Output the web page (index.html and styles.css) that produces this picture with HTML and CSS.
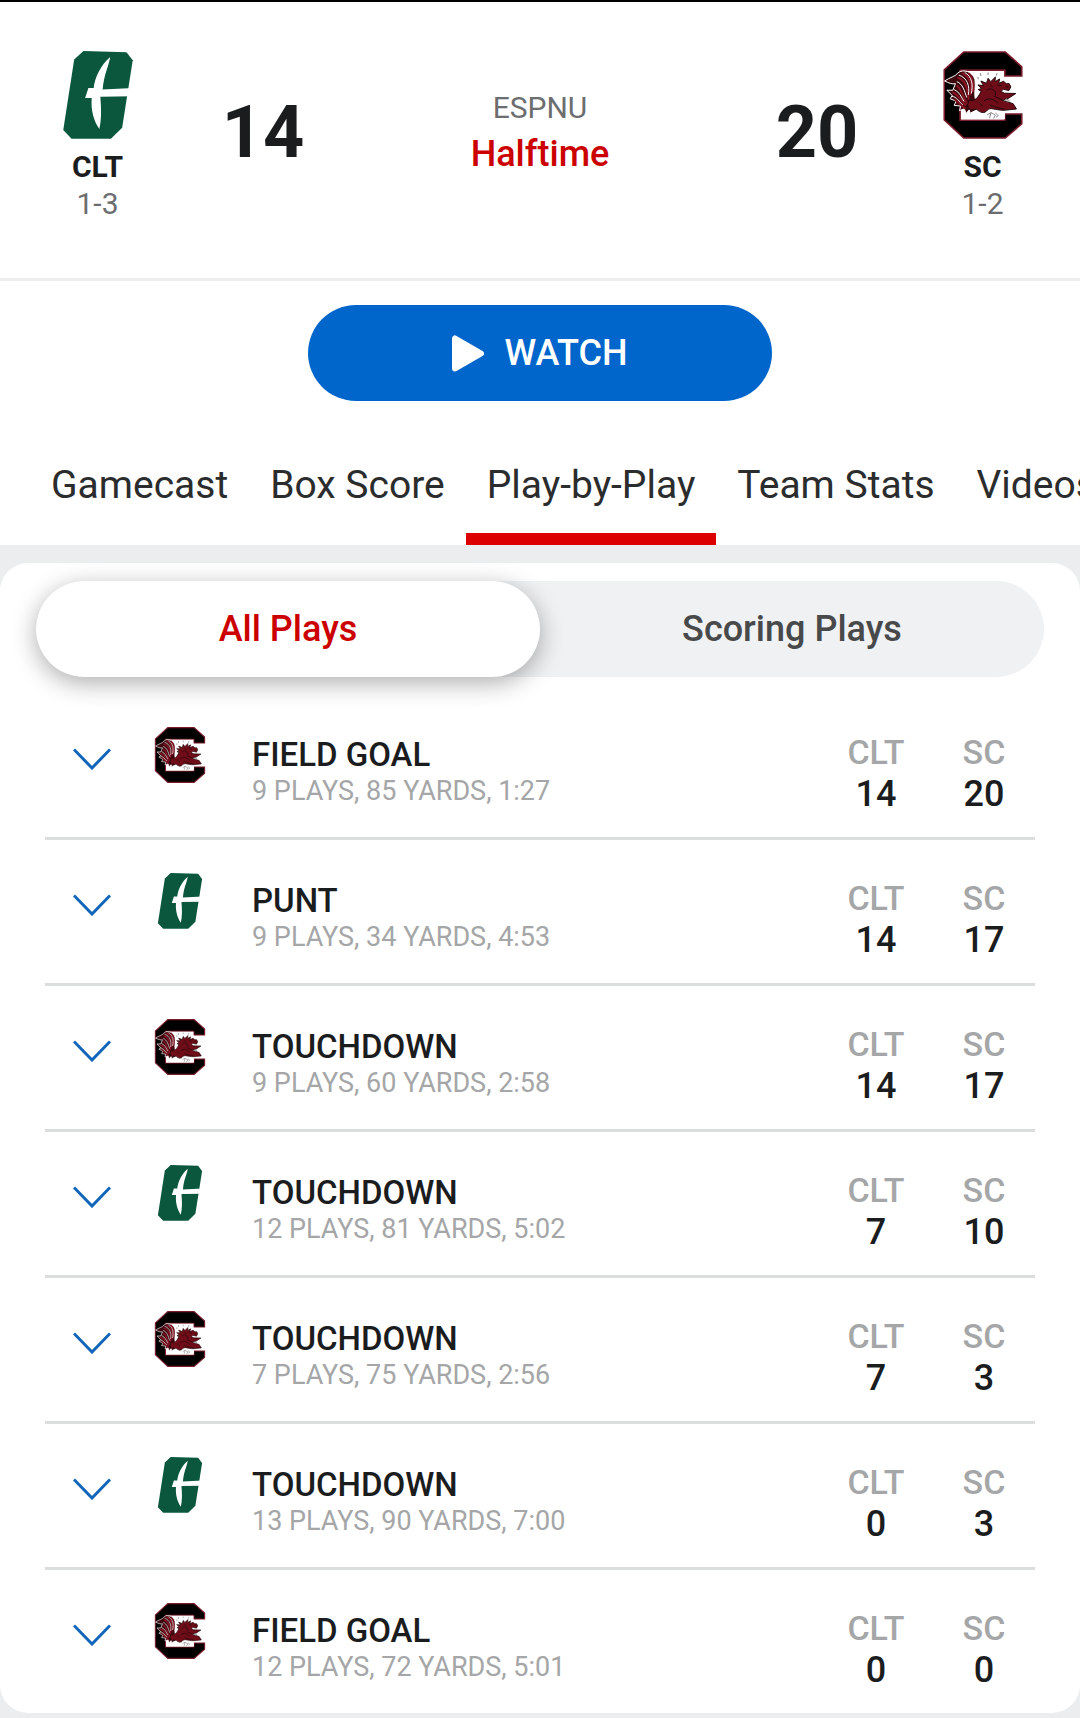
FILE: index.html
```html
<!DOCTYPE html>
<html lang="en">
<head>
<meta charset="utf-8">
<meta name="viewport" content="width=device-width, initial-scale=1">
<title>CLT at SC - Play-by-Play</title>
<link rel="stylesheet" href="styles.css">
</head>
<body>
<svg class="sprite" aria-hidden="true">
  <symbol id="clt" viewBox="56 62 240 266">
    <path fill="#0b573e" d="M132 62L262 66L281 90L249 294L215 327H96L71 301L104 88Z"/>
    <path fill="#fff" d="M213 80C207 112 194 132 190 178L282 174L278 199L183 200C186 238 187 266 180 298C163 272 154 242 157 204H137L147 174H163C166 142 184 105 213 80Z"/>
  </symbol>
  <symbol id="sc" viewBox="71 61 241 267">
    <path fill="#000" stroke="#7b1c2b" stroke-width="5" d="M133 64H259L309 109V137H258V119H122V271H258V252H309V282L259 325H133L74 270V118Z"/>
    <path fill="#fff" d="M125 122H255V142L277 160L274 178L292 188V238L258 242V268H125Z"/>
    <path fill="#3c080e" stroke="#fff" stroke-width="3" d="M75 152C92 140 106 140 116 127C130 115 160 122 167 148C170 170 164 188 168 206L176 238L152 250L150 239L140 251L135 236L120 242L124 228L104 226L110 213L92 206L98 196L82 180L100 180L108 160C98 163 88 158 75 152Z"/>
    <path fill="none" stroke="#8a1423" stroke-width="6" d="M128 128C150 138 160 160 153 196M114 142C136 146 146 176 148 210M112 166C126 176 130 198 144 222M98 186C116 190 124 212 140 226M106 208L138 236M148 128C162 142 164 164 161 186"/>
    <path fill="none" stroke="#fff" stroke-width="3" d="M136 126C158 138 162 164 156 190M118 134C144 142 152 168 147 194M112 154C130 160 136 184 142 202M104 178C120 184 126 202 134 214M96 198C112 200 120 216 130 224"/>
    <path fill="#6e0d18" stroke="#23080b" stroke-width="3" d="M150 208C162 218 174 204 180 194L186 184L177 178L187 175L176 164L193 166L185 152L202 159L207 144L215 154L229 140L228 154L242 146L239 159L254 153L262 160L271 160L276 170L270 181L253 177L246 184L257 189L291 190L268 205L250 210L283 221L293 237L254 241C228 240 213 231 205 240C196 252 184 249 172 238L152 240L144 226Z"/>
    <path fill="none" stroke="#23080b" stroke-width="3" d="M203 180C215 170 233 180 229 196M194 213C210 201 222 206 238 220M212 162L222 171M235 164L249 167M260 170H269M225 198L249 209M179 216L190 228M212 224C226 233 240 233 256 237"/>
    <path fill="none" stroke="#888" stroke-width="3" d="M204 255L216 248L211 265M216 248L229 256L223 266M229 249L238 257L231 262M254 213L263 206L274 214M264 207L265 217M176 139L177 147M184 128L185 137M207 126V134M234 128L232 136"/>
  </symbol>
  <symbol id="chevron" viewBox="0 0 38 22">
    <path fill="none" stroke="#1266b9" stroke-width="3" d="M1 1.500L19 20L37 1.500"/>
  </symbol>
</svg>

<header class="scoreboard">
  <div class="team">
    <svg class="team-logo" role="img" aria-label="Charlotte"><use href="#clt"/></svg>
    <span class="team-name">CLT</span>
    <span class="team-record">1-3</span>
  </div>
  <span class="score">14</span>
  <div class="status">
    <span class="network">ESPNU</span>
    <span class="clock">Halftime</span>
  </div>
  <span class="score">20</span>
  <div class="team">
    <svg class="team-logo" role="img" aria-label="South Carolina"><use href="#sc"/></svg>
    <span class="team-name">SC</span>
    <span class="team-record">1-2</span>
  </div>
</header>

<div class="watch-bar">
  <button class="watch" type="button">
    <svg class="play" viewBox="0 0 32 37" aria-hidden="true"><path fill="#fff" stroke="#fff" stroke-width="6" stroke-linejoin="round" d="M3 3.500V33.500L29 18.500Z"/></svg>
    WATCH
  </button>
</div>

<nav class="tabs">
  <a href="#gamecast">Gamecast</a>
  <a href="#box-score">Box Score</a>
  <a class="active" href="#plays" aria-current="page">Play-by-Play</a>
  <a href="#team-stats">Team Stats</a>
  <a href="#videos">Videos</a>
</nav>

<main class="card" id="plays">
  <div class="toggle">
    <button class="selected" type="button" aria-pressed="true">All Plays</button>
    <button type="button" aria-pressed="false">Scoring Plays</button>
  </div>
  <ul class="drives">
    <li>
      <button class="expand" type="button" aria-label="Show drive"><svg><use href="#chevron"/></svg></button>
      <svg class="drive-logo" role="img" aria-label="SC"><use href="#sc"/></svg>
      <div class="drive"><h2>FIELD GOAL</h2><p>9 PLAYS, 85 YARDS, 1:27</p></div>
      <dl><div><dt>CLT</dt><dd>14</dd></div><div><dt>SC</dt><dd>20</dd></div></dl>
    </li>
    <li>
      <button class="expand" type="button" aria-label="Show drive"><svg><use href="#chevron"/></svg></button>
      <svg class="drive-logo" role="img" aria-label="CLT"><use href="#clt"/></svg>
      <div class="drive"><h2>PUNT</h2><p>9 PLAYS, 34 YARDS, 4:53</p></div>
      <dl><div><dt>CLT</dt><dd>14</dd></div><div><dt>SC</dt><dd>17</dd></div></dl>
    </li>
    <li>
      <button class="expand" type="button" aria-label="Show drive"><svg><use href="#chevron"/></svg></button>
      <svg class="drive-logo" role="img" aria-label="SC"><use href="#sc"/></svg>
      <div class="drive"><h2>TOUCHDOWN</h2><p>9 PLAYS, 60 YARDS, 2:58</p></div>
      <dl><div><dt>CLT</dt><dd>14</dd></div><div><dt>SC</dt><dd>17</dd></div></dl>
    </li>
    <li>
      <button class="expand" type="button" aria-label="Show drive"><svg><use href="#chevron"/></svg></button>
      <svg class="drive-logo" role="img" aria-label="CLT"><use href="#clt"/></svg>
      <div class="drive"><h2>TOUCHDOWN</h2><p>12 PLAYS, 81 YARDS, 5:02</p></div>
      <dl><div><dt>CLT</dt><dd>7</dd></div><div><dt>SC</dt><dd>10</dd></div></dl>
    </li>
    <li>
      <button class="expand" type="button" aria-label="Show drive"><svg><use href="#chevron"/></svg></button>
      <svg class="drive-logo" role="img" aria-label="SC"><use href="#sc"/></svg>
      <div class="drive"><h2>TOUCHDOWN</h2><p>7 PLAYS, 75 YARDS, 2:56</p></div>
      <dl><div><dt>CLT</dt><dd>7</dd></div><div><dt>SC</dt><dd>3</dd></div></dl>
    </li>
    <li>
      <button class="expand" type="button" aria-label="Show drive"><svg><use href="#chevron"/></svg></button>
      <svg class="drive-logo" role="img" aria-label="CLT"><use href="#clt"/></svg>
      <div class="drive"><h2>TOUCHDOWN</h2><p>13 PLAYS, 90 YARDS, 7:00</p></div>
      <dl><div><dt>CLT</dt><dd>0</dd></div><div><dt>SC</dt><dd>3</dd></div></dl>
    </li>
    <li>
      <button class="expand" type="button" aria-label="Show drive"><svg><use href="#chevron"/></svg></button>
      <svg class="drive-logo" role="img" aria-label="SC"><use href="#sc"/></svg>
      <div class="drive"><h2>FIELD GOAL</h2><p>12 PLAYS, 72 YARDS, 5:01</p></div>
      <dl><div><dt>CLT</dt><dd>0</dd></div><div><dt>SC</dt><dd>0</dd></div></dl>
    </li>
  </ul>
</main>
</body>
</html>
```
FILE: styles.css
```css
* {
  box-sizing: border-box;
}

body {
  margin: 0;
  padding-bottom: 5px;
  background: #ecedef;
  color: #1b1c1e;
  font-family: Roboto, "Liberation Sans", sans-serif;
  font-size: 30px;
  overflow-x: hidden;
}

h2, p, ul, dl, dd {
  margin: 0;
  padding: 0;
}

button {
  border: 0;
  padding: 0;
  background: none;
  font: inherit;
  font-size: 36px;
  font-weight: 500;
}

svg {
  display: block;
}

.sprite {
  display: none;
}

/* Scoreboard */
.scoreboard {
  display: grid;
  grid-template-columns: 195px 136px 1fr 136px 195px;
  padding: 49px 0 56px;
  border-top: 2px solid #000;
  border-bottom: 3px solid #eee;
  background: #fff;
  text-align: center;
}

.team,
.status {
  display: flex;
  flex-direction: column;
  align-items: center;
}

.team {
  line-height: 37px;
}

.team-logo {
  width: 80px;
  height: 88px;
  margin-bottom: 9px;
}

.team-name {
  font-weight: 700;
}

.team-record,
.network {
  color: #6c6d6f;
}

.score {
  padding-top: 42px;
  font-size: 72px;
  font-weight: 700;
  line-height: 80px;
}

.status {
  padding-top: 34px;
  line-height: 46px;
}

.clock {
  color: #cc0000;
  font-size: 36px;
  font-weight: 500;
}

/* Watch button */
.watch-bar {
  display: flex;
  justify-content: center;
  padding: 24px 0;
  background: #fff;
}

.watch {
  display: flex;
  align-items: center;
  justify-content: center;
  gap: 20px;
  width: 43%;
  height: 96px;
  border-radius: 48px;
  background: #0066cc;
  color: #fff;
}

.play {
  width: 32px;
  height: 37px;
}

/* Tabs */
.tabs {
  display: flex;
  padding: 12px 0 0 30px;
  overflow: hidden;
  background: #fff;
}

.tabs a {
  padding: 0 21px;
  border-bottom: 12px solid transparent;
  color: #2b2c2d;
  font-size: 39px;
  line-height: 96px;
  text-decoration: none;
  white-space: nowrap;
}

.tabs .active {
  border-color: #dd0000;
}

/* Play list */
.card {
  margin-top: 18px;
  padding-top: 18px;
  border-radius: 28px;
  background: #fff;
}

.toggle {
  display: flex;
  margin: 0 36px;
  border-radius: 48px;
  background: #f0f1f3;
}

.toggle button {
  flex: 1;
  height: 96px;
  border-radius: 48px;
  color: #48494a;
}

.toggle .selected {
  background: #fff;
  box-shadow: 0 6px 24px rgba(0, 0, 0, 0.32);
  color: #cc0000;
}

.drives {
  padding: 17px 45px 0;
  list-style: none;
}

.drives li {
  display: grid;
  grid-template-columns: 94px 82px 1fr auto;
  align-items: start;
  padding: 33px 0 22px;
  border-bottom: 3px solid #dcdddd;
}

.drives li:last-child {
  border-bottom: 0;
}

.expand {
  display: flex;
  justify-content: center;
  padding-top: 21px;
}

.expand svg {
  width: 38px;
  height: 22px;
}

.drive-logo {
  width: 52px;
  height: 56px;
  justify-self: center;
}

.drive {
  padding: 9px 0 0 31px;
  line-height: 37px;
}

.drive h2 {
  font-size: 33px;
  font-weight: 500;
}

.drive p {
  color: #a5a6a7;
  font-size: 27px;
}

dl {
  display: flex;
  gap: 8px;
  padding: 4px 1px 0 0;
  font-weight: 500;
  line-height: 42px;
  text-align: center;
}

dl div {
  width: 100px;
}

dt {
  color: #a5a6a7;
  font-size: 34px;
}

dd {
  font-size: 36px;
}
```
